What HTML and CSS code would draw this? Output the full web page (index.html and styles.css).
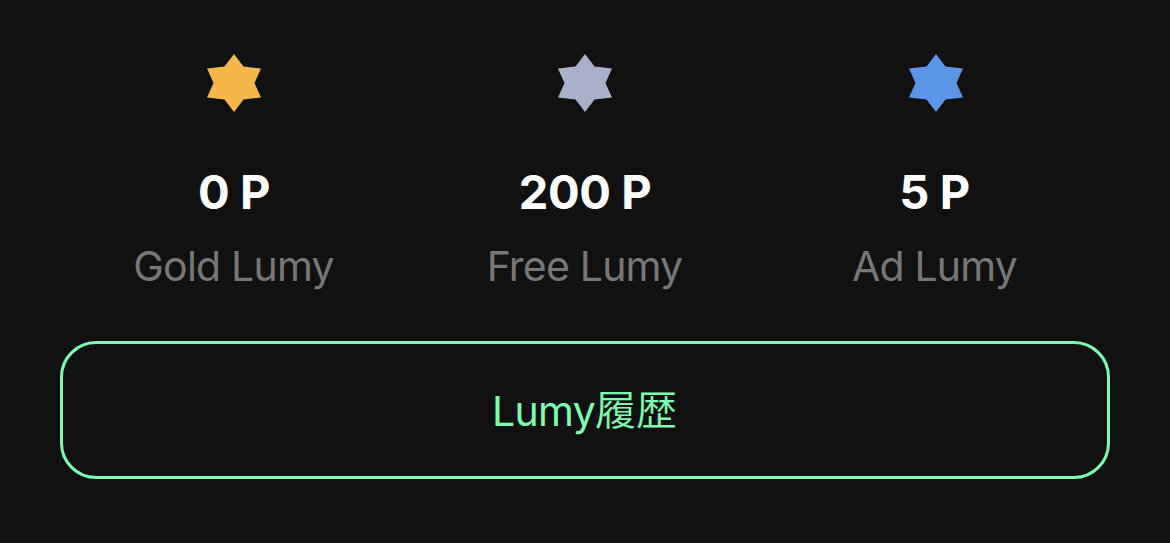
FILE: index.html
```html
<!DOCTYPE html>
<html lang="ja">
  <head>
    <meta charset="utf-8">
    <title>Lumy</title>
    <link rel="stylesheet" href="styles.css">
  </head>
  <body>
    <svg class="defs">
      <symbol id="star" viewBox="0 0 54 58">
        <path d="M27 0L36.5 12.5L54 14.5L47.5 29L54 43.5L36.5 45.5L27 58L17.5 45.5L0 43.5L6.5 29L0 14.5L17.5 12.5Z" />
      </symbol>
    </svg>
    <div class="wallet">
      <ul class="balances">
        <li class="balance">
          <svg class="star gold"><use href="#star" /></svg>
          <span class="points">0 P</span>
          <span class="label">Gold Lumy</span>
        </li>
        <li class="balance">
          <svg class="star free"><use href="#star" /></svg>
          <span class="points">200 P</span>
          <span class="label">Free Lumy</span>
        </li>
        <li class="balance">
          <svg class="star ad"><use href="#star" /></svg>
          <span class="points">5 P</span>
          <span class="label">Ad Lumy</span>
        </li>
      </ul>
      <button class="history">Lumy<span class="kanji">履歴</span></button>
    </div>
  </body>
</html>
```
FILE: styles.css
```css
body {
  margin: 0;
  height: 543px;
  overflow: hidden;
  background: #111111;
  font-family: Inter, "Noto Sans CJK JP", sans-serif;
}

.defs {
  display: none;
}

.wallet {
  padding: 54px 60px 0;
}

.balances {
  display: grid;
  grid-template-columns: repeat(3, 351px);
  justify-content: center;
  margin: 0;
  padding: 0;
  list-style: none;
}

.balance {
  display: flex;
  flex-direction: column;
  align-items: center;
}

.star {
  width: 54px;
  height: 58px;
}

.gold {
  fill: #f4b74a;
}

.free {
  fill: #a9b0cc;
}

.ad {
  fill: #5c96e8;
}

.points {
  margin-top: 50px;
  font-size: 47px;
  font-weight: 700;
  line-height: 60px;
  letter-spacing: -0.4px;
  color: #ffffff;
}

.label {
  margin-top: 19px;
  padding-right: 1px;
  font-size: 41px;
  line-height: 50px;
  letter-spacing: -0.8px;
  color: #777777;
}

.balance:last-child .points,
.balance:last-child .label {
  padding-right: 3px;
}

.history {
  display: block;
  box-sizing: border-box;
  width: 100%;
  height: 138px;
  margin-top: 50px;
  padding: 0 1px 6px 0;
  border: 3px solid #7dfbb1;
  border-radius: 36px;
  background: none;
  color: #7dfbb1;
  font: inherit;
  font-size: 41px;
  letter-spacing: -0.7px;
}

.kanji {
  font-weight: 350;
  letter-spacing: 0;
  vertical-align: 1px;
}
```
